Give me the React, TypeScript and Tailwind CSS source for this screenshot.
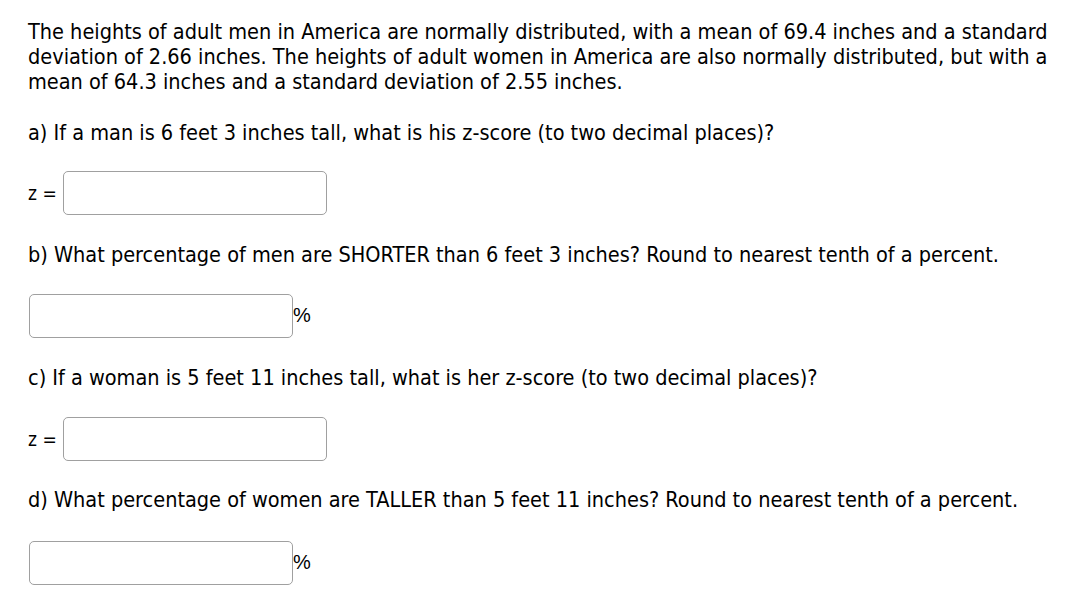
const body = 'font-["DejaVu_Sans_Condensed","DejaVu_Sans",sans-serif] text-[21.5px] leading-[25px] text-black';

function ZInput() {
  return (
    <div className="flex items-center">
      <span className='w-[35px] text-[19px] leading-[22px] font-["DejaVu_Sans_Condensed",sans-serif] text-black'>z =</span>
      <input type="text" className="w-[264px] h-[44px] border border-[#a0a0a0] rounded-[5px] bg-white" />
    </div>
  );
}

function PctInput() {
  return (
    <div className="flex items-center pl-px">
      <input type="text" className="w-[264px] h-[44px] border border-[#a0a0a0] rounded-[5px] bg-white" />
      <span className='self-end mb-[12px] text-[20px] leading-[22px] font-["Liberation_Sans",sans-serif] text-black'>%</span>
    </div>
  );
}

export default function App() {
  return (
    <div className="min-h-screen bg-white pl-7 pr-4 pt-[19px]">
      <p className={body}>
        The heights of adult men in America are normally distributed, with a mean of 69.4 inches and a standard
        deviation of 2.66 inches. The heights of adult women in America are also normally distributed, but with a
        mean of 64.3 inches and a standard deviation of 2.55 inches.
      </p>

      <p className={`${body} mt-[26px]`}>a) If a man is 6 feet 3 inches tall, what is his z-score (to two decimal places)?</p>
      <div className="mt-[26px]">
        <ZInput />
      </div>

      <p className={`${body} mt-[26.5px]`}>
        b) What percentage of men are SHORTER than 6 feet 3 inches? Round to nearest tenth of a percent.
      </p>
      <div className="mt-[27.5px]">
        <PctInput />
      </div>

      <p className={`${body} mt-[27px]`}>c) If a woman is 5 feet 11 inches tall, what is her z-score (to two decimal places)?</p>
      <div className="mt-[26.5px]">
        <ZInput />
      </div>

      <p className={`${body} mt-[26.5px]`}>
        d) What percentage of women are TALLER than 5 feet 11 inches? Round to nearest tenth of a percent.
      </p>
      <div className="mt-[28.5px]">
        <PctInput />
      </div>
    </div>
  );
}
